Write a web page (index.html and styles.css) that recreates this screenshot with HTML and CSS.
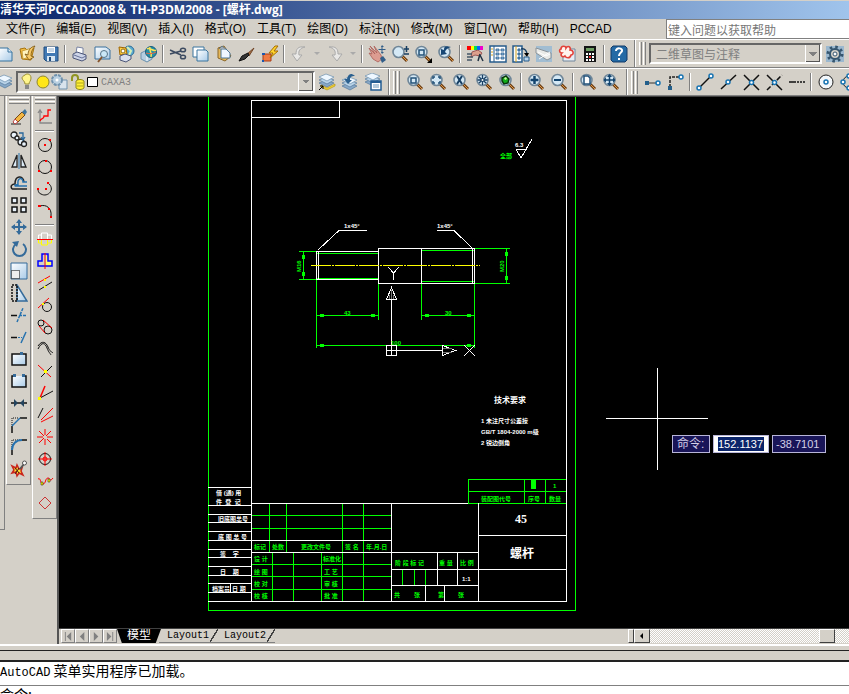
FILE: index.html
```html
<!DOCTYPE html>
<html lang="zh-CN">
<head>
    <meta charset="UTF-8">
    <title>清华天河PCCAD2008 - [螺杆.dwg]</title>
    <link rel="stylesheet" href="styles.css">
</head>
<body>
    <!-- 共用图标 -->
    <svg class="defs" aria-hidden="true">
        <defs>
            <symbol id="lens" viewBox="0 0 18 18">
                <path d="M11 11l5 5" stroke="#6b3d12" stroke-width="3"/>
                <path d="M11 11l5 5" stroke="#e39a4a" stroke-width="1"/>
                <circle cx="7.500" cy="7" r="5.500" fill="#d4e8f5" stroke="#6f8698" stroke-width="1.600"/>
            </symbol>
            <symbol id="layers" viewBox="0 0 18 18">
                <path d="M1 11l7-3 8 3-7 4z" fill="#88a9c8" stroke="#55789b" stroke-width=".7"/>
                <path d="M1 8l7-3 8 3-7 4z" fill="#b9d3e8" stroke="#55789b" stroke-width=".7"/>
                <path d="M1 5l7-3 8 3-7 4z" fill="#eef7ff" stroke="#6b8fae" stroke-width=".7"/>
            </symbol>
            <symbol id="printer" viewBox="0 0 18 18">
                <path d="M5 8l1-6 6 1v6z" fill="#fff" stroke="#7883a3"/>
                <path d="M2 9l4-2 9 3v4l-4 2-9-3z" fill="#cdd4e8" stroke="#4c5678"/>
                <path d="M3 10l8 3 4-2" fill="none" stroke="#68739a"/>
            </symbol>
            <linearGradient id="paper" x2="1" y2="1">
                <stop offset="0" stop-color="#fff"/>
                <stop offset="1" stop-color="#a9cbe8"/>
            </linearGradient>
        </defs>
    </svg>

    <div class="title-bar">
        <h1>清华天河PCCAD2008＆ TH-P3DM2008 - [螺杆.dwg]</h1>
    </div>

    <div class="menu-bar">
        <nav class="menu">
            <a href="#">文件(F)</a>
            <a href="#">编辑(E)</a>
            <a href="#">视图(V)</a>
            <a href="#">插入(I)</a>
            <a href="#">格式(O)</a>
            <a href="#">工具(T)</a>
            <a href="#">绘图(D)</a>
            <a href="#">标注(N)</a>
            <a href="#">修改(M)</a>
            <a href="#">窗口(W)</a>
            <a href="#">帮助(H)</a>
            <a href="#">PCCAD</a>
        </nav>
        <input class="help-input" type="text" aria-label="帮助" placeholder="键入问题以获取帮助">
    </div>

    <!-- 标准工具栏 -->
    <div class="toolbar-row first-row">
        <div class="toolbar clipped">
            <button aria-label="新建"><svg viewBox="0 0 18 18"><path d="M3 3h9l4 4v9H3z" fill="url(#paper)" stroke="#37729e"/><path d="M12 3v4h4" fill="#dceaf5" stroke="#37729e"/></svg></button>
            <button aria-label="打开"><svg viewBox="0 0 18 18"><path d="M1 4l5-1 2 2 7-2-3 12-9-1z" fill="#f4bd43" stroke="#a87511"/><path d="M3 6l10-3-3 9-6 2z" fill="#fff3bd" stroke="#b8871d" stroke-width=".7"/><path d="M16 1c-5 1-7 5-7 9l-3-1 4 6 5-3-3-1c0-4 1-6 4-10" fill="#f7c968" stroke="#77520c" stroke-width=".8"/></svg></button>
            <button aria-label="保存"><svg viewBox="0 0 18 18"><path d="M2 2h14v14H4l-2-2z" fill="#4179b4" stroke="#204d7e"/><path d="M5 2h8v6H5z" fill="#fff"/><path d="M5 11h8v5H5z" fill="#d7e5f1"/><path d="M7 12h2v4H7z" fill="#204d7e"/><path d="M6 4h6M6 6h6" stroke="#8eadcc"/></svg></button>
            <span class="separator"></span>
            <button aria-label="打印"><svg><use href="#printer"/></svg></button>
            <button aria-label="打印预览"><svg viewBox="0 0 18 18"><path d="M1 2h11l4 3v9H1z" fill="url(#paper)" stroke="#3b719d"/><circle cx="10" cy="9" r="3.500" fill="#cae7f7" stroke="#567488"/><path d="M8 12l-4 5" stroke="#86532a" stroke-width="2"/></svg></button>
            <button aria-label="发布"><svg viewBox="0 0 18 18"><circle cx="12" cy="6" r="5" fill="#60add2" stroke="#286c96"/><path d="M10 2l4 4-2 4" stroke="#d7efb6" stroke-width="2" fill="none"/><path d="M2 2l7 1 1 6-7 1z" fill="#ffcf44" stroke="#9f6500"/><circle cx="6" cy="6" r="2" fill="#fff" stroke="#8e6c12"/><path d="M3 11l5-2 6 2v3l-5 3-6-2z" fill="#d9dfed" stroke="#4c5678"/></svg></button>
            <button aria-label="三维 DWF"><svg viewBox="0 0 18 18"><path d="M1 8l6-3 5 3v6l-5 3-6-3z" fill="#b4cde0" stroke="#6b91ae"/><path d="M7 5v11" stroke="#fff"/><circle cx="11" cy="7" r="5.500" fill="#2390a8" stroke="#185c7b"/><path d="M7 4c3-2 6 3 9 1M10 2c-2 4 3 5 1 10" fill="none" stroke="#ffe453" stroke-width="1.500"/><path d="M6 8c3 1 7 1 10-1" fill="none" stroke="#ef6644"/></svg></button>
            <span class="separator"></span>
            <button aria-label="剪切"><svg viewBox="0 0 18 18" fill="none" stroke="#3c4a60" stroke-width="1.500"><path d="M1 5l11 5M1 9l11-3"/><ellipse cx="14" cy="5" rx="2.500" ry="1.800"/><ellipse cx="14" cy="12" rx="2.500" ry="1.800"/></svg></button>
            <button aria-label="复制"><svg viewBox="0 0 18 18" stroke="#3b749e"><path d="M1 2h11v10H1z" fill="#fff"/><path d="M5 5h9l2 2v9H5z" fill="url(#paper)"/></svg></button>
            <button aria-label="粘贴"><svg viewBox="0 0 18 18"><path d="M3 3l6-2 7 10-6 5-7-3z" fill="#e5b75a" stroke="#8b6728"/><path d="M6 4h5l4 4v5H6z" fill="#eff6ff" stroke="#4b7496"/><path d="M4 4l3-3 4 3" fill="#9ea9b1" stroke="#687781"/></svg></button>
            <button aria-label="特性匹配"><svg viewBox="0 0 18 18"><path d="M16 3l-7 6 2 2z" fill="#aa7348" stroke="#714628"/><path d="M10 8l-6 3-3 5 6-2 4-4z" fill="#333" stroke="#111"/></svg></button>
            <button aria-label="块编辑器"><svg viewBox="0 0 18 18"><path d="M2 9h8v7H2z" fill="#ef7a43" stroke="#a93c18"/><path d="M1 16h2M1 9h3" stroke="#1b58b0" stroke-width="2"/><path d="M14 1L8 8h4l-3 5 8-7h-4l4-5z" fill="#ffd52f" stroke="#a76d00"/></svg></button>
            <span class="separator"></span>
            <button aria-label="放弃"><svg viewBox="0 0 18 18"><path d="M15 2C8 1 6 4 6 9H2l5 7 5-6H9c-1-4 1-7 6-8z" fill="#e9e8e6" stroke="#aaa"/></svg></button>
            <button class="drop-arrow" aria-label="放弃列表"></button>
            <button aria-label="重做"><svg viewBox="0 0 18 18"><path d="M3 2c7-1 9 2 9 7h4l-5 7-5-6h3c1-4-1-7-6-8z" fill="#e9e8e6" stroke="#aaa"/></svg></button>
            <button class="drop-arrow" aria-label="重做列表"></button>
            <span class="separator"></span>
            <button aria-label="实时平移"><svg viewBox="0 0 18 18"><path d="M1 3l6 6-5-8 7 7-3-7 7 9 1 4-4 3-5-3-4-6 3 1z" fill="#dc9c91" stroke="#a95e58" stroke-width=".8"/><path d="M12 13l3-2 3 4-4 3z" fill="#315d88"/><path d="M14 1v7M10.500 4.500h7" stroke="#315d88"/><path d="M14 0l-1 2h3zM14 9l-1-2h3z" fill="#315d88"/></svg></button>
            <button aria-label="实时缩放"><svg viewBox="0 0 18 18"><use href="#lens"/><path d="M13 4h5M15.500 1v6M13 9h5" stroke="#173e62" stroke-width="1.500"/></svg></button>
            <button aria-label="窗口缩放"><svg viewBox="0 0 18 18"><use href="#lens"/><path d="M5 5h5v5H5z" fill="none" stroke="#235178" stroke-width="1.500"/><path d="M18 13v5h-5z"/></svg></button>
            <button aria-label="缩放上一个"><svg viewBox="0 0 18 18"><use href="#lens"/><path d="M14 2C8 0 7 2 7 5L4 4v6l6-1-2-2c1-3 3-4 6-5z" fill="#174775"/></svg></button>
            <span class="separator"></span>
            <button aria-label="特性"><svg viewBox="0 0 18 18"><path d="M1 1h4v4H1z" fill="red"/><path d="M5 1h3v4H5z" fill="#ff0"/><path d="M8 1h3v4H8z" fill="#0d5"/><path d="M11 1h3v4h-3z" fill="#06f"/><path d="M14 1h3v4h-3z" fill="#e0c"/><path d="M6 7l6-2 4 3-2 3-5-1-4 2z" fill="#dda08d" stroke="#955"/><path d="M1 9h5M1 12h6M1 15h5" stroke="#456" stroke-width="1.500"/><path d="M14 9l-2 7M14 10l3 6" stroke="#234" stroke-width="1.500"/></svg></button>
            <button aria-label="设计中心"><svg viewBox="0 0 18 18"><path d="M1 1h16v16H1z" fill="#fff" stroke="#275c8c" stroke-width="1.500"/><path d="M5 1v16" stroke="#275c8c"/><path d="M2 4h2M2 7h2M2 10h2" stroke="#d4a11f"/><path d="M7 4h3v2H7zM12 4h3v2h-3zM7 8h3v2H7zM12 8h3v2h-3zM7 12h3v2H7zM12 12h3v2h-3z" fill="#91bce1" stroke="#275c8c" stroke-width=".8"/></svg></button>
            <button aria-label="工具选项板"><svg viewBox="0 0 18 18"><path d="M1 1h9v16H1z" fill="#f6fbff" stroke="#275c8c" stroke-width="1.500"/><path d="M4 1v16" stroke="#d4a11f"/><path d="M6 4h2v2H6zM6 8h2v2H6zM6 12h2v2H6z" fill="#91bce1" stroke="#275c8c"/><path d="M9 4c4-1 6 2 6 6" fill="none" stroke="#173e62" stroke-width="1.500"/><path d="M12 8h5l-2 4z"/><path d="M12 12h5v4h-5z" fill="#b8d4ec" stroke="#275c8c"/></svg></button>
            <button aria-label="图纸集管理器"><svg viewBox="0 0 18 18"><path d="M1 1h16v16H1z" fill="#a1bdd2"/><path d="M1 3l15 5v5l-4 2L1 8z" fill="#e9eae7" stroke="#8a9298"/><path d="M3 7l8 4 4-2M4 14l11-7" stroke="#fff" fill="none"/></svg></button>
            <button aria-label="标记集管理器"><svg viewBox="0 0 18 18"><path d="M5 4h12v12H5z" fill="#e7edf4" stroke="#70869b"/><path d="M3 4c0-4 5-3 5-1 2-3 5-1 4 2 4 0 4 5 1 5-1 4-5 3-6 1-3 2-5-1-3-3-3 0-3-4-1-4z" fill="#fff4ee" stroke="#e34239" stroke-width="1.600"/></svg></button>
            <button aria-label="快速计算器"><svg viewBox="0 0 18 18"><path d="M3 1h12v16H3z" fill="#151515"/><path d="M5 3h8v3H5z" fill="#6d9d62"/><path d="M5 9h9M5 12h9M5 15h9" stroke="#fff" stroke-width="2" stroke-dasharray="2 1"/><path d="M8 12h2" stroke="#f22" stroke-width="2"/></svg></button>
            <span class="separator"></span>
            <button aria-label="帮助"><svg viewBox="0 0 18 18"><path d="M3 1h12l2 2v12l-2 2H3l-2-2V3z" fill="#246aa5" stroke="#123b69"/><path d="M6 6c0-4 7-3 6 0-1 2-3 2-3 5M9 13v2" fill="none" stroke="#fff" stroke-width="2"/></svg></button>
        </div>
        <div class="toolbar workspace-bar">
            <span class="grip"></span>
            <select class="workspace-select" aria-label="工作空间"><option>二维草图与注释</option></select>
            <button aria-label="工作空间设置"><svg viewBox="0 0 18 18"><path d="M0 1h18v16H0z" fill="#9bb8cf"/><circle cx="9" cy="9" r="5" fill="#d4d0c8" stroke="#36566f" stroke-width="2"/><circle cx="9" cy="9" r="7" fill="none" stroke="#36566f" stroke-width="3" stroke-dasharray="2.500 3"/><circle cx="9" cy="9" r="2" fill="#fff" stroke="#36566f"/></svg></button>
        </div>
    </div>

    <!-- 图层、缩放和对象捕捉 -->
    <div class="toolbar-row">
        <div class="toolbar clipped">
            <button aria-label="图层特性管理器"><svg><use href="#layers"/></svg></button>
            <div class="layer-box">
                <svg class="layer-state" viewBox="0 0 78 18" aria-hidden="true">
                    <path d="M5 2c2-2 6-1 6 3 0 3-2 4-2 6H5c0-3-3-4-3-6 0-1 1-2 3-3z" fill="#fff58c" stroke="#9b8e32"/><path d="M5 12h4v4H5z" fill="#888"/>
                    <circle cx="23" cy="9" r="6" fill="#ffe619" stroke="#8f8731"/>
                    <path d="M39 7h8v9h-8z" fill="#d8e3ec" stroke="#6f91ad"/><circle cx="37" cy="7" r="5" fill="#b9d0e1" stroke="#6f91ad" stroke-width="2" stroke-dasharray="3 1"/><circle cx="37" cy="7" r="1.500" fill="#fff"/>
                    <path d="M52 8V5c0-4 6-4 6 0v3" fill="none" stroke="#8f9421" stroke-width="2"/><path d="M56 8c2-2 6-2 8 0v7c-2 2-6 2-8 0z" fill="#ffef36" stroke="#8c871c"/><path d="M57 10h6M57 13h6" stroke="#afa51b"/>
                    <path d="M67.500 4.500h10v9h-10z" fill="#fff" stroke="#000"/>
                </svg>
                <select class="layer-select" aria-label="图层"><option>CAXA3</option></select>
            </div>
            <button aria-label="将对象的图层置为当前"><svg viewBox="0 0 18 18"><use href="#layers" y="-1"/><path d="M3 12l6 3 8-4v2l-8 4-6-3z" fill="#f4d332" stroke="#ad8e10" stroke-width=".6"/><path d="M1 17l4-4M2 13h3v3" stroke="#000" fill="none"/></svg></button>
            <button aria-label="上一个图层"><svg viewBox="0 0 18 18"><use href="#layers" y="2"/><path d="M14 3C9-1 7 2 6 6H3l4 5 4-4H9c0-3 1-4 5-4z" fill="#2b608f"/></svg></button>
            <button aria-label="图层状态管理器"><svg viewBox="0 0 18 18"><use href="#layers" y="-2"/><path d="M7 8h10v9H7z" fill="#fff" stroke="#235c92" stroke-width="1.500"/><path d="M7 9h10" stroke="#235c92" stroke-width="2"/><path d="M9 12h6M9 14h6" stroke="#6995ba"/></svg></button>
        </div>
        <div class="toolbar">
            <span class="grip"></span>
            <button aria-label="缩放窗口"><svg viewBox="0 0 18 18"><use href="#lens"/><path d="M5 5h5v5H5z" fill="none" stroke="#235178" stroke-width="1.500"/></svg></button>
            <button aria-label="动态缩放"><svg viewBox="0 0 18 18"><use href="#lens"/><path d="M4 6V4h2M9 4h2v2M11 8v2H9M6 10H4V8" fill="none" stroke="#235178" stroke-width="1.500"/></svg></button>
            <button aria-label="比例缩放"><svg viewBox="0 0 18 18"><use href="#lens"/><path d="M5 3l5 8M10 3l-5 8" stroke="#163e63" stroke-width="2"/></svg></button>
            <button aria-label="中心缩放"><svg viewBox="0 0 18 18"><use href="#lens"/><path d="M7.500 2v10M2.500 7h10M4 4l7 6M11 4l-7 6" stroke="#163e63" stroke-width="1.300"/><circle cx="7.500" cy="7" r="1" fill="#fff"/></svg></button>
            <button aria-label="缩放对象"><svg viewBox="0 0 18 18"><use href="#lens"/><path d="M4 5l4-2 3 3-1 4-4 1-2-3z" fill="#10ad19" stroke="#07330b" stroke-width="1.500"/><path d="M6 5l2-1 1 2-2 1z" fill="#c5ff9f"/></svg></button>
            <span class="separator"></span>
            <button aria-label="放大"><svg viewBox="0 0 18 18"><use href="#lens"/><path d="M7.500 3v8M3.500 7h8" stroke="#12446f" stroke-width="2.500"/></svg></button>
            <button aria-label="缩小"><svg viewBox="0 0 18 18"><use href="#lens"/><path d="M4 7h7" stroke="#12446f" stroke-width="2"/></svg></button>
            <span class="separator"></span>
            <button aria-label="全部缩放"><svg viewBox="0 0 18 18"><use href="#lens"/><path d="M5 3h4l2 2v6H5z" fill="#fff" stroke="#235178" stroke-width="1.500"/></svg></button>
            <button aria-label="范围缩放"><svg viewBox="0 0 18 18"><use href="#lens"/><path d="M7.500 2v10M2.500 7h10" stroke="#12446f" stroke-width="1.500"/><path d="M7.500 1L5 4h5zM7.500 13L5 10h5zM1.500 7L4 4.500v5zM13.500 7L11 4.500v5z" fill="#12446f"/></svg></button>
        </div>
        <div class="toolbar snap-bar">
            <span class="grip"></span>
            <button aria-label="临时追踪点"><svg viewBox="0 0 18 18"><path d="M2 10h10" stroke="#333"/><path d="M1 8h4v4H1z" fill="#235f8b"/><circle cx="14" cy="10" r="2" fill="#fff" stroke="#1874b2" stroke-width="1.500"/></svg></button>
            <button aria-label="捕捉自"><svg viewBox="0 0 18 18"><path d="M3 14V4h9" fill="none" stroke="#222" stroke-width="1.500" stroke-dasharray="3 1"/><path d="M1 13h4v4H1z" fill="#235f8b"/><circle cx="14" cy="4" r="2" fill="#fff" stroke="#1874b2" stroke-width="1.500"/></svg></button>
            <span class="separator"></span>
            <button aria-label="端点"><svg viewBox="0 0 18 18"><path d="M3 15L15 3" stroke="#111" stroke-width="1.500"/><g fill="#fff" stroke="#1874b2" stroke-width="1.500"><circle cx="3" cy="15" r="2"/><circle cx="15" cy="3" r="2"/></g></svg></button>
            <button aria-label="中点"><svg viewBox="0 0 18 18"><path d="M2 16L17 2" stroke="#111" stroke-width="1.500"/><circle cx="9" cy="9" r="2" fill="#fff" stroke="#1874b2" stroke-width="1.500"/></svg></button>
            <button aria-label="交点"><svg viewBox="0 0 18 18"><path d="M2 2l15 15M2 17L17 2" stroke="#111" stroke-width="1.500"/><circle cx="9.500" cy="9.500" r="2" fill="#fff" stroke="#1874b2" stroke-width="1.500"/></svg></button>
            <button aria-label="外观交点"><svg viewBox="0 0 18 18"><path d="M2 2l15 15" stroke="#111" stroke-width="1.500"/><path d="M2 17L17 2" stroke="#111" stroke-width="1.500" stroke-dasharray="5 2"/><circle cx="9.500" cy="9.500" r="2" fill="#fff" stroke="#1874b2" stroke-width="1.500"/></svg></button>
            <button aria-label="延长线"><svg viewBox="0 0 18 18"><path d="M1 9h7" stroke="#111" stroke-width="1.500"/><path d="M9 9h8" stroke="#111" stroke-width="1.500" stroke-dasharray="2 1"/></svg></button>
            <span class="separator"></span>
            <button aria-label="圆心"><svg viewBox="0 0 18 18"><circle cx="9" cy="9" r="7" fill="#f3f7fa" stroke="#222"/><circle cx="9" cy="9" r="2" fill="#fff" stroke="#1874b2" stroke-width="1.500"/></svg></button>
            <button aria-label="象限点"><svg viewBox="0 0 18 18"><circle cx="9" cy="9" r="6" fill="none" stroke="#222"/><g fill="#fff" stroke="#1874b2" stroke-width="1.500"><circle cx="9" cy="3" r="2"/><circle cx="3" cy="9" r="2"/><circle cx="9" cy="15" r="2"/></g></svg></button>
        </div>
    </div>

    <div class="work-area">
        <aside class="side-tools">
            <div class="tool-column edge-column"></div>
            <!-- 修改 -->
            <div class="tool-column">
                <span class="grip-h"></span>
                <button aria-label="删除"><svg viewBox="0 0 18 18"><path d="M1 16h10" stroke="#222"/><path d="M5 11l7-7 3 3-7 7z" fill="#f3b641" stroke="#754a15"/><path d="M12 4l3-3 2 3-2 3z" fill="#3f759e"/><path d="M5 11l3 3-3 2-2-2z" fill="#fff" stroke="#b44"/></svg></button>
                <button aria-label="复制对象"><svg viewBox="0 0 18 18" fill="#e9f2fa" stroke="#222" stroke-width="1.300"><circle cx="4" cy="5" r="3"/><circle cx="7" cy="8" r="2"/><circle cx="11" cy="12" r="3"/><circle cx="14" cy="14" r="2.500"/><path d="M9 3h4v6M11 7l2 3 2-3" fill="none" stroke="#28679b"/></svg></button>
                <button aria-label="镜像"><svg viewBox="0 0 18 18"><path d="M7 3v12H2zM11 3v12h5z" fill="#dceaf5" stroke="#222" stroke-width="1.300"/><path d="M9 1v16" stroke="#2672af"/></svg></button>
                <button aria-label="偏移"><svg viewBox="0 0 18 18" fill="none"><path d="M2 15c-2-3 0-5 3-5 0-9 8-9 9-2M2 15h15" stroke="#222" stroke-width="1.500"/><path d="M17 12H6c-2 0-1-2 2-1-1-8 5-8 5-3h4" stroke="#2672af" stroke-width="1.500"/></svg></button>
                <button aria-label="阵列"><svg viewBox="0 0 18 18" fill="#e8f1f9" stroke="#111" stroke-width="1.500"><path d="M2 2h5v5H2zM11 2h5v5h-5zM2 11h5v5H2zM11 11h5v5h-5z"/></svg></button>
                <button aria-label="移动"><svg viewBox="0 0 18 18"><path d="M9 2v14M2 9h14" stroke="#356b9a" stroke-width="2"/><path d="M9 1l3 4H6zM9 17l-3-4h6zM1 9l4-3v6zM17 9l-4 3V6z" fill="#356b9a"/></svg></button>
                <button aria-label="旋转"><svg viewBox="0 0 18 18"><path d="M6 4a6.500 6.500 0 1 0 7 0" fill="none" stroke="#356b9a" stroke-width="2"/><path d="M2 2l7-1-2 6z" fill="#356b9a"/></svg></button>
                <button aria-label="缩放"><svg viewBox="0 0 18 18"><path d="M1 1h16v16H1z" fill="url(#paper)" stroke="#356b9a"/><path d="M1.500 8.500h8v8h-8z" fill="#eee" stroke="#000" stroke-dasharray="1 1"/></svg></button>
                <button aria-label="拉伸"><svg viewBox="0 0 18 18"><path d="M7 1l10 16H7z" fill="url(#paper)" stroke="#356b9a" stroke-width="1.500"/><path d="M2 1h5v16H2z" fill="none" stroke="#111" stroke-width="1.500" stroke-dasharray="2 1"/></svg></button>
                <button aria-label="修剪"><svg viewBox="0 0 18 18"><path d="M1 9.500h6" stroke="#111" stroke-width="1.500"/><path d="M7 16l6-14M9 9.500h8" stroke="#2672af" stroke-width="1.500" stroke-dasharray="3 1"/></svg></button>
                <button aria-label="延伸"><svg viewBox="0 0 18 18"><path d="M1 9.500h6" stroke="#111" stroke-width="1.500"/><path d="M8 9.500h4" stroke="#2672af" stroke-dasharray="2 1"/><path d="M11 15l5-11" stroke="#2672af" stroke-width="1.500"/></svg></button>
                <button aria-label="打断于点"><svg viewBox="0 0 18 18"><path d="M2 4h14v11H2z" fill="url(#paper)" stroke="#111" stroke-width="1.500"/><path d="M10 2h3v3h-3z" fill="#356b9a"/></svg></button>
                <button aria-label="打断"><svg viewBox="0 0 18 18"><path d="M4 4H2v11h14V4h-2" fill="url(#paper)" stroke="#111" stroke-width="1.500"/><path d="M3 2h3v3H3zM12 2h3v3h-3z" fill="#356b9a"/></svg></button>
                <button aria-label="合并"><svg viewBox="0 0 18 18"><path d="M1 9h16" stroke="#111" stroke-width="1.500"/><path d="M4 5l4 4-4 4zM14 5l-4 4 4 4z" fill="#24445f"/></svg></button>
                <button aria-label="倒角"><svg viewBox="0 0 18 18" fill="none"><path d="M2 17v-7M10 2h7" stroke="#111" stroke-width="1.500"/><path d="M2 9V2h7" stroke="#111" stroke-dasharray="1 1"/><path d="M2 10l8-8" stroke="#2672af" stroke-width="1.500"/></svg></button>
                <button aria-label="圆角"><svg viewBox="0 0 18 18" fill="none"><path d="M2 17v-5M12 2h5" stroke="#111" stroke-width="1.500"/><path d="M2 11V2h9" stroke="#111" stroke-dasharray="1 1"/><path d="M2 12C2 6 6 2 12 2" stroke="#2672af" stroke-width="2"/></svg></button>
                <button aria-label="分解"><svg viewBox="0 0 18 18"><path d="M2 6l4 2 1-3 2 4 3-1-1 3 2 4-4-2-2 3-1-4-4 1 2-3z" fill="#ffe133" stroke="#ca271c" stroke-width="1.500"/><path d="M5 8l4 5M9 8l-4 6" stroke="#4b1610"/><path d="M10 9l4-5" stroke="#555" stroke-width="2"/><circle cx="14.500" cy="3" r="2" fill="#fff" stroke="#555"/></svg></button>
            </div>
            <!-- 天河常用绘图 -->
            <div class="tool-column">
                <span class="grip-h"></span>
                <button aria-label="坐标"><svg viewBox="0 0 18 18" fill="none"><path d="M4 3v12h12M2 5l2-3 2 3" stroke="#888" stroke-width="1.300"/><path d="M4 13c1-4 4-1 4-5h4V2h3" stroke="red" stroke-width="1.300"/></svg></button>
                <span class="separator-h"></span>
                <button aria-label="圆心画圆"><svg viewBox="0 0 18 18"><circle cx="9" cy="9" r="6.500" fill="none" stroke="#111"/><path d="M8 8h2v2H8zM13 3h2v2h-2z" fill="red"/></svg></button>
                <button aria-label="三点画圆"><svg viewBox="0 0 18 18"><circle cx="9" cy="9" r="6.500" fill="none" stroke="#111"/><path d="M9 2h2v2H9zM2 12h2v2H2zM14 12h2v2h-2z" fill="red"/></svg></button>
                <button aria-label="圆弧"><svg viewBox="0 0 18 18"><path d="M12 3c8 6 0 15-7 11-3-1-3-4-3-6" fill="none" stroke="#111"/><path d="M11 2h2v2h-2zM9 8h2v2H9zM1 8h2v2H1z" fill="red"/></svg></button>
                <button aria-label="三点圆弧"><svg viewBox="0 0 18 18"><path d="M4 4c6-2 12 2 11 10" fill="none" stroke="#111"/><path d="M2 3h3v2H2zM12 6h2v2h-2zM14 14h2v2h-2z" fill="red"/></svg></button>
                <span class="separator-h"></span>
                <button aria-label="轴"><svg viewBox="0 0 18 18" fill="none"><path d="M2.500 9V5h3V3h6v2h4v4M5.500 5v4M11.500 5v4" stroke="#fff"/><path d="M2.500 9v4h3v2h6v-2h4V9M5.500 9v4M11.500 9v4" stroke="#ff0"/><path d="M1 9.500h16" stroke="red"/></svg></button>
                <button aria-label="剖面"><svg viewBox="0 0 18 18"><path d="M10 4h2v5h4v5h-6z" fill="#ff6"/><path d="M6 2h6v7h4v5H2V9h4z" fill="none" stroke="#00f" stroke-width="1.500"/><path d="M9 1v16" stroke="red"/></svg></button>
                <button aria-label="平行线"><svg viewBox="0 0 18 18"><path d="M2 9l12-7" stroke="red"/><path d="M3 16l13-8" stroke="#111"/><path d="M8 5h2v2H8zM8 12h2v2H8z" fill="#ff0"/></svg></button>
                <button aria-label="切线"><svg viewBox="0 0 18 18"><circle cx="11" cy="11" r="4.500" fill="none" stroke="#111"/><path d="M2 12L13 2" stroke="red"/><path d="M6 7h2v2H6z" fill="#ff0"/></svg></button>
                <button aria-label="公切线"><svg viewBox="0 0 18 18" fill="none"><circle cx="5" cy="5" r="3" stroke="#111"/><circle cx="12" cy="12" r="4" stroke="#111"/><path d="M7 2l9 8M3 8l6 7" stroke="red"/></svg></button>
                <button aria-label="双曲线"><svg viewBox="0 0 18 18" fill="none" stroke="#111"><path d="M2 9c4-8 7-6 9-1s3 5 4 7M2 6c4-6 8-4 10 1s3 4 5 6"/></svg></button>
                <button aria-label="交点线"><svg viewBox="0 0 18 18"><path d="M2 3l13 12" stroke="red"/><path d="M16 4L5 15" stroke="#111"/><path d="M8 8h3v3H8z" fill="#ff0"/></svg></button>
                <button aria-label="角度线"><svg viewBox="0 0 18 18"><path d="M4 14L9 2" stroke="red" stroke-width="1.500"/><path d="M4 14l13-7" stroke="#111"/><path d="M2 13h3v3H2z" fill="#ff0"/></svg></button>
                <button aria-label="角分线"><svg viewBox="0 0 18 18"><path d="M2 12L7 2" stroke="#111"/><path d="M5 14L17 2M5 16l12-6" stroke="red"/></svg></button>
                <button aria-label="放射线"><svg viewBox="0 0 18 18"><path d="M9 1v6M9 11v6M1 9h6M11 9h6M3 3l5 5M11 11l4 4M15 3l-5 5M8 10l-5 5" stroke="red"/></svg></button>
                <button aria-label="中心线"><svg viewBox="0 0 18 18" fill="none"><circle cx="9" cy="9" r="5.500" stroke="#111"/><circle cx="9" cy="9" r="2" stroke="red"/><path d="M9 2v14M2 9h14" stroke="red"/></svg></button>
                <button aria-label="波浪线"><svg viewBox="0 0 18 18"><path d="M2 7c3-2 2 5 5 5s2-6 5-6 1 5 5 0" fill="none" stroke="red"/><path d="M5 10h2v3H5zM12 7h2v3h-2z" fill="#ff0" stroke="#111" stroke-width=".5"/></svg></button>
                <button aria-label="多边形"><svg viewBox="0 0 18 18"><path d="M9 3l6 6-6 6-6-6z" fill="none" stroke="#c33"/></svg></button>
            </div>
        </aside>

        <main class="document">
            <div class="canvas">
                <svg class="drawing" viewBox="60 97 789 531" width="789" height="531" role="img" aria-label="螺杆零件图">
                    <g class="green">
                        <path d="M208.500 97V610.500H575.500V97"/>
                        <!-- 螺纹和尺寸线 -->
                        <path d="M317 253.500h61M317 278.500h61M422 250.500h52M422 281.500h52"/>
                        <path d="M299 251.500h19M299 279.500h19M303.500 251v28M474 248.500h36M474 283.500h36M506.500 248v35"/>
                        <path d="M316.500 280v68M378.500 284v36M421.500 284v36M474.500 284v64M316 315.500h62M421 315.500h53M316 345.500h158"/>
                        <!-- 明细栏 -->
                        <path d="M468.500 503V479.500h98V503M468 491.500h98M524.500 479v24M545.500 479v24M468 503.500h98"/>
                        <path d="M251 515.500h140M251 528.500h140M251 564.500h140M251 576.500h140M251 589.500h140"/>
                        <path d="M269.500 503v49M286.500 503v49M342.500 503v98M363.500 503v98M272.500 552v49M293.500 552v49M321.500 552v49M402.500 569v16M414.500 569v16M425.500 569v16"/>
                    </g>
                    <g class="green-fill">
                        <path d="M302 255h3v4h-3zM302 272h3v4h-3zM505 252h3v4h-3zM505 276h3v4h-3zM320 314h4v3h-4zM371 314h4v3h-4zM425 314h4v3h-4zM467 314h4v3h-4zM320 344h4v3h-4zM467 344h4v3h-4zM531 480h5v9h-5z"/>
                    </g>
                    <g class="white">
                        <path d="M251.500 100.500h315v501h-315zM251.500 117.500h88v-17"/>
                        <path d="M208 487.500h43M208 505.500h43M208 514.500h43M208 522.500h43M208 531.500h43M208 540.500h43M208 549.500h43M208 557.500h43M208 566.500h43M208 575.500h43M208 583.500h43M208 592.500h43M208 601.500h43M230.500 583v9"/>
                        <path d="M251 503.500h217M251 540.500h140M251 552.500h227M391.500 503v98M478.500 503v98M478 535.500h88M391 569.500h175M391 585.500h87M437.500 552v33M457.500 552v33M425.500 585v16M444.500 585v16"/>
                        <!-- 螺杆 -->
                        <path d="M378 251.500h-62v28h62M318.500 251v28M378.500 248.500h96v35h-96zM421.500 248v35M472.500 248v35"/>
                        <path d="M318 250l21-19.500h28M472 248l-18-17.500h-17M516 149.500h11M516 149l5 9 11-19"/>
                        <!-- 坐标系 -->
                        <path d="M386.500 345.500h10v10h-10zM391.500 355v-56M386 350.500h56M386.500 299.500h10l-5-12zM442.500 345.500v10l13-5zM388 267l5.500 6 5.500-6M393.500 273v7M464 345l11 11M475 345l-11 11"/>
                    </g>
                    <path class="center-line" d="M311 265.500h169"/>
                    <path class="arrow-shade" d="M391.500 290v9M389.500 295v4M393.500 295v4M443 348.500h9M443 352.500h9"/>

                    <g class="cad-text tiny">
                        <text x="344" y="228">1x45°</text>
                        <text x="437" y="228">1x45°</text>
                        <text x="515" y="147">6.3</text>
                        <text x="481" y="423">1 未注尺寸公差按</text>
                        <text x="481" y="434">GB/T 1804-2000 m级</text>
                        <text x="481" y="445">2 锐边倒角</text>
                        <text x="216" y="495" xml:space="preserve">借 (通) 用</text>
                        <text x="216" y="504" xml:space="preserve">件  登  记</text>
                        <text x="218" y="521">旧底图总号</text>
                        <text x="218" y="539">底 图 总 号</text>
                        <text x="220" y="556" xml:space="preserve">签    字</text>
                        <text x="220" y="574" xml:space="preserve">日    期</text>
                        <text x="212" y="591">档案员</text>
                        <text x="232" y="591">日 期</text>
                        <text x="462" y="581">1:1</text>
                    </g>
                    <g class="cad-text tiny green-text">
                        <text x="500" y="158">全部</text>
                        <text x="344" y="315">43</text>
                        <text x="445" y="315">30</text>
                        <text x="391" y="345">100</text>
                        <text transform="translate(301 272) rotate(-90)">M16</text>
                        <text transform="translate(504 272) rotate(-90)">M20</text>
                        <text x="254" y="549">标记</text>
                        <text x="272" y="549">处数</text>
                        <text x="301" y="549">更改文件号</text>
                        <text x="345" y="549">签 名</text>
                        <text x="366" y="549">年.月.日</text>
                        <text x="254" y="561">设 计</text>
                        <text x="254" y="574">绘 图</text>
                        <text x="254" y="586">校 对</text>
                        <text x="254" y="598">校 核</text>
                        <text x="323" y="561">标准化</text>
                        <text x="324" y="574">工 艺</text>
                        <text x="324" y="586">审 核</text>
                        <text x="324" y="598">批 准</text>
                        <text x="395" y="565">阶 段 标 记</text>
                        <text x="439" y="565">重 量</text>
                        <text x="460" y="565">比 例</text>
                        <text x="394" y="597">共</text>
                        <text x="414" y="597">张</text>
                        <text x="438" y="597">第</text>
                        <text x="458" y="597">张</text>
                        <text x="481" y="501">装配图代号</text>
                        <text x="528" y="501">序号</text>
                        <text x="549" y="501">数量</text>
                        <text x="553" y="488">1</text>
                    </g>
                    <text class="cad-text note-title" x="494" y="403">技术要求</text>
                    <text class="cad-text part-name" x="515" y="523">45</text>
                    <text class="cad-text part-name" x="510" y="558">螺杆</text>

                    <path class="crosshair" d="M606 418.500h102M657.500 368v102"/>
                </svg>
                <div class="dynamic-input">
                    <label class="prompt" for="coordX">命令:</label>
                    <span class="coord active"><input id="coordX" type="text" value="152.1137"></span>
                    <span class="coord"><input type="text" aria-label="Y 坐标" value="-38.7101"></span>
                </div>
            </div>
            <div class="sheet-bar">
                <div class="sheet-nav">
                    <button aria-label="第一个"><svg viewBox="0 0 10 10"><path d="M1 0v10h1V0zM8 0v10L3 5z"/></svg></button>
                    <button aria-label="上一个"><svg viewBox="0 0 10 10"><path d="M7 0v10L2 5z"/></svg></button>
                    <button aria-label="下一个"><svg viewBox="0 0 10 10"><path d="M2 0v10l5-5z"/></svg></button>
                    <button aria-label="最后一个"><svg viewBox="0 0 10 10"><path d="M1 0v10l5-5zM7 0v10h1V0z"/></svg></button>
                </div>
                <button class="sheet-tab active">模型</button>
                <button class="sheet-tab">Layout1</button>
                <button class="sheet-tab">Layout2</button>
                <div class="h-scroll">
                    <span class="split-handle"></span>
                    <button class="scroll-left" aria-label="向左滚动"><svg viewBox="0 0 6 6"><path d="M4 0v6L1 3z"/></svg></button>
                    <div class="scroll-track"><span class="scroll-thumb"></span></div>
                </div>
            </div>
        </main>
    </div>

    <div class="command-splitter"></div>
    <section class="command">
        <p class="history"><span>AutoCAD</span> 菜单实用程序已加载。</p>
        <p class="command-line">命令:</p>
    </section>
</body>
</html>
```

FILE: styles.css
```css
* {
    box-sizing: border-box;
    margin: 0;
    padding: 0;
}
body {
    display: flex;
    flex-direction: column;
    height: 100vh;
    overflow: hidden;
    background-color: #d4d0c8;
    color: #000;
    font-family: "Noto Sans", "Noto Sans CJK SC", sans-serif;
    font-size: 12px;
}
button {
    border: none;
    background: none;
    font: inherit;
}
.defs {
    position: absolute;
    width: 0;
    height: 0;
}

/* 标题和菜单 */
.title-bar {
    flex: none;
    height: 19px;
    border-top: 1px solid #d4d0c8;
    background: linear-gradient(to right, #0a246a, #a0c4ec);
    overflow: hidden;
}
.title-bar h1 {
    color: #fff;
    font-family: "Open Sans", "Noto Sans CJK SC", sans-serif;
    font-size: 12px;
    line-height: 18px;
    white-space: nowrap;
}
.menu-bar {
    display: flex;
    flex: none;
    height: 20px;
}
.menu {
    display: flex;
    flex: 1;
    gap: 11px;
    padding-left: 6px;
    line-height: 20px;
    white-space: nowrap;
}
.menu a {
    color: #000;
    font-size: 12px;
    text-decoration: none;
    font-family: "Liberation Sans", "Noto Sans CJK SC", sans-serif;
}
.help-input {
    width: 183px;
    border: 1px solid #808080;
    border-right: none;
    background-color: #fff;
    padding-left: 1px;
    font-family: "Noto Sans CJK SC", sans-serif;
    font-size: 12px;
}
.help-input::placeholder {
    color: #777;
}

/* 工具栏 */
.toolbar-row {
    display: flex;
    flex: none;
    height: 28px;
    border-top: 1px solid #fff;
    border-bottom: 1px solid #808080;
    overflow: hidden;
}
.toolbar-row.first-row {
    height: 29px;
}
.toolbar {
    display: flex;
    flex: none;
    align-items: center;
    padding-right: 4px;
    border-left: 1px solid #fff;
    border-right: 1px solid #808080;
}
.toolbar.clipped {
    margin-left: -8px;
}
.toolbar button {
    display: flex;
    flex: none;
    align-items: center;
    justify-content: center;
    width: 23px;
    height: 22px;
}
.toolbar button svg,
.tool-column button svg {
    width: 18px;
    height: 18px;
}
.toolbar .drop-arrow {
    width: 13px;
}
.drop-arrow::after {
    content: "";
    border: 3px solid transparent;
    border-top-color: #aaa;
    border-bottom: none;
}
.separator {
    width: 2px;
    height: 18px;
    margin: 0 2px;
    border-left: 1px solid #808080;
    border-right: 1px solid #fff;
}
.grip {
    width: 7px;
    height: 23px;
    margin: 0 3px;
    background: repeating-linear-gradient(to right, #fff 0 1px, #d4d0c8 1px 2px, #808080 2px 3px, #d4d0c8 3px 4px);
}
.toolbar.workspace-bar,
.toolbar.snap-bar {
    flex: 1;
    border-right: none;
    padding-right: 0;
}
select {
    appearance: none;
    height: 21px;
    border: 2px solid;
    border-color: #666 #fff #fff #666;
    background-color: #d4d0c8;
    color: #808080;
}
.workspace-select,
.layer-box {
    border: 2px solid;
    border-color: #666 #fff #fff #666;
}
.workspace-select {
    flex: none;
    width: 173px;
    padding-left: 5px;
    font-family: "Noto Sans CJK SC", sans-serif;
    font-size: 12px;
}
.workspace-select,
.layer-select {
    background-image: linear-gradient(45deg, transparent 50%, #808080 50%), linear-gradient(-45deg, transparent 50%, #808080 50%), linear-gradient(#555, #555), linear-gradient(#555, #555), linear-gradient(#fff, #fff);
    background-position: right 7px top 7px, right 3px top 7px, right 0 top 0, right 0 bottom 0, right 14px top 0;
    background-size: 4px 4px, 4px 4px, 1px 100%, 14px 1px, 1px 100%;
    background-repeat: no-repeat;
}
.workspace-select + button {
    margin-left: 1px;
}
.layer-box {
    display: flex;
    align-items: center;
    width: 299px;
    height: 22px;
    padding-left: 2px;
}
.layer-state {
    flex: none;
    width: 78px;
    height: 18px;
}
.layer-select {
    flex: 1;
    height: 18px;
    border: none;
    padding-left: 3px;
    font-family: "Liberation Mono", monospace;
    font-size: 10px;
}

/* 工作区 */
.work-area {
    display: flex;
    flex: 1;
    min-height: 0;
}
.side-tools {
    display: flex;
    flex: none;
    align-items: flex-start;
    gap: 1px;
    width: 57px;
}
.tool-column {
    display: flex;
    flex-direction: column;
    align-items: center;
    width: 25px;
    padding-bottom: 4px;
    border-left: 1px solid #fff;
    border-right: 1px solid #808080;
    border-bottom: 1px solid #808080;
}
.edge-column {
    width: 5px;
    height: 434px;
    border-left: none;
}
.tool-column button {
    display: flex;
    align-items: center;
    justify-content: center;
    width: 23px;
    height: 22px;
}
.grip-h {
    width: 20px;
    height: 7px;
    margin: 1px 0 2px;
    background: repeating-linear-gradient(#fff 0 1px, #d4d0c8 1px 2px, #808080 2px 3px, #d4d0c8 3px 4px);
}
.separator-h {
    width: 19px;
    height: 2px;
    margin: 2px 0;
    border-top: 1px solid #808080;
    border-bottom: 1px solid #fff;
}
.document {
    display: flex;
    flex: 1;
    flex-direction: column;
    min-width: 0;
    border-left: 2px solid #555;
    border-top: 1px solid #404040;
}
.canvas {
    position: relative;
    flex: 1;
    min-height: 0;
    border-left: 1px solid #000;
    background-color: #000;
    overflow: hidden;
}
.drawing {
    display: block;
    shape-rendering: crispEdges;
}
.green {
    fill: none;
    stroke: #0f0;
}
.green-fill {
    fill: #0f0;
}
.white,
.crosshair {
    fill: none;
    stroke: #fff;
}
.center-line {
    stroke: #ff0;
    stroke-dasharray: 20 1 2 1;
}
.arrow-shade {
    stroke: #777;
}
.cad-text {
    fill: #fff;
    font-family: "Liberation Sans", "Noto Sans CJK SC", sans-serif;
    font-weight: bold;
}
.cad-text.tiny {
    font-size: 6px;
}
.cad-text.green-text {
    fill: #0f0;
}
.cad-text.note-title {
    font-size: 8px;
}
.cad-text.part-name {
    font-family: "Liberation Serif", "Noto Sans CJK SC", serif;
    font-size: 12px;
}

/* 动态输入 */
.dynamic-input {
    position: absolute;
    left: 612px;
    top: 338px;
    display: flex;
    gap: 3px;
    color: #d4d0e8;
    font-family: "Liberation Sans", "Noto Sans CJK SC", sans-serif;
    font-size: 12px;
}
.prompt,
.coord {
    height: 18px;
    border: 1px solid #b8b5d8;
    background-color: #191558;
    line-height: 16px;
}
.prompt {
    width: 38px;
    padding-left: 4px;
}
.coord {
    display: flex;
    width: 54px;
    padding: 1px 3px;
}
.coord.active {
    width: 56px;
    padding: 1px 4px;
    background-color: #fff;
}
.coord input {
    width: 100%;
    border: none;
    background: none;
    color: #d4d0e8;
    font-family: "Liberation Sans", sans-serif;
    font-size: 11px;
}
.coord.active input {
    background-color: #0a246a;
    color: #fff;
}

/* 布局选项卡 */
.sheet-bar {
    display: flex;
    flex: none;
    height: 16px;
    border-top: 1px solid #404040;
    border-bottom: 1px solid #d4d0c8;
    font-family: "Liberation Mono", "Noto Sans CJK SC", monospace;
}
.sheet-nav {
    display: flex;
    margin-left: 2px;
}
.sheet-nav button {
    display: flex;
    align-items: center;
    justify-content: center;
    width: 14px;
    border: 1px solid;
    border-color: #fff #808080 #808080 #fff;
}
.sheet-nav svg {
    width: 9px;
    height: 9px;
    fill: #808080;
}
.sheet-tab {
    margin-right: -2px;
    padding: 0 9px 0 8px;
    border-bottom: 1px solid #808080;
    background: linear-gradient(to bottom right, transparent 44%, #404040 45%, #404040 55%, transparent 56%) right / 8px 100% no-repeat;
    font-size: 10px;
    line-height: 14px;
}
.sheet-tab.active {
    border: none;
    background: #000;
    color: #fff;
    clip-path: polygon(0 0, 100% 0, 88% 100%, 11% 100%);
    padding: 0 10px;
    font-size: 12px;
}
.h-scroll {
    display: flex;
    width: 221px;
    margin-left: auto;
}
.split-handle,
.scroll-left,
.scroll-thumb {
    border: 1px solid;
    border-color: #fff #404040 #404040 #fff;
    background-color: #d4d0c8;
}
.split-handle {
    width: 6px;
}
.scroll-left {
    display: flex;
    align-items: center;
    justify-content: center;
    width: 16px;
}
.scroll-left svg {
    width: 6px;
    height: 6px;
}
.scroll-track {
    display: flex;
    flex: 1;
    justify-content: flex-end;
    padding-right: 14px;
    background: repeating-conic-gradient(#fff 0 25%, #d4d0c8 0 50%) 0 0 / 2px 2px;
}
.scroll-thumb {
    width: 16px;
}

/* 命令行 */
.command-splitter {
    flex: none;
    height: 18px;
    border-top: 2px solid #fff;
    border-bottom: 2px solid #222;
    background: linear-gradient(#222, #222) 0 4px / 100% 1px no-repeat;
}
.command {
    flex: none;
    height: 32px;
    background-color: #fff;
    font-family: "Noto Sans CJK SC", sans-serif;
    font-size: 14px;
    overflow: hidden;
}
.history {
    height: 24px;
    border-bottom: 1px solid #808080;
    line-height: 16px;
}
.history span {
    font-family: "Liberation Mono", monospace;
    font-size: 12px;
}
.command-line {
    line-height: 16px;
}
```
